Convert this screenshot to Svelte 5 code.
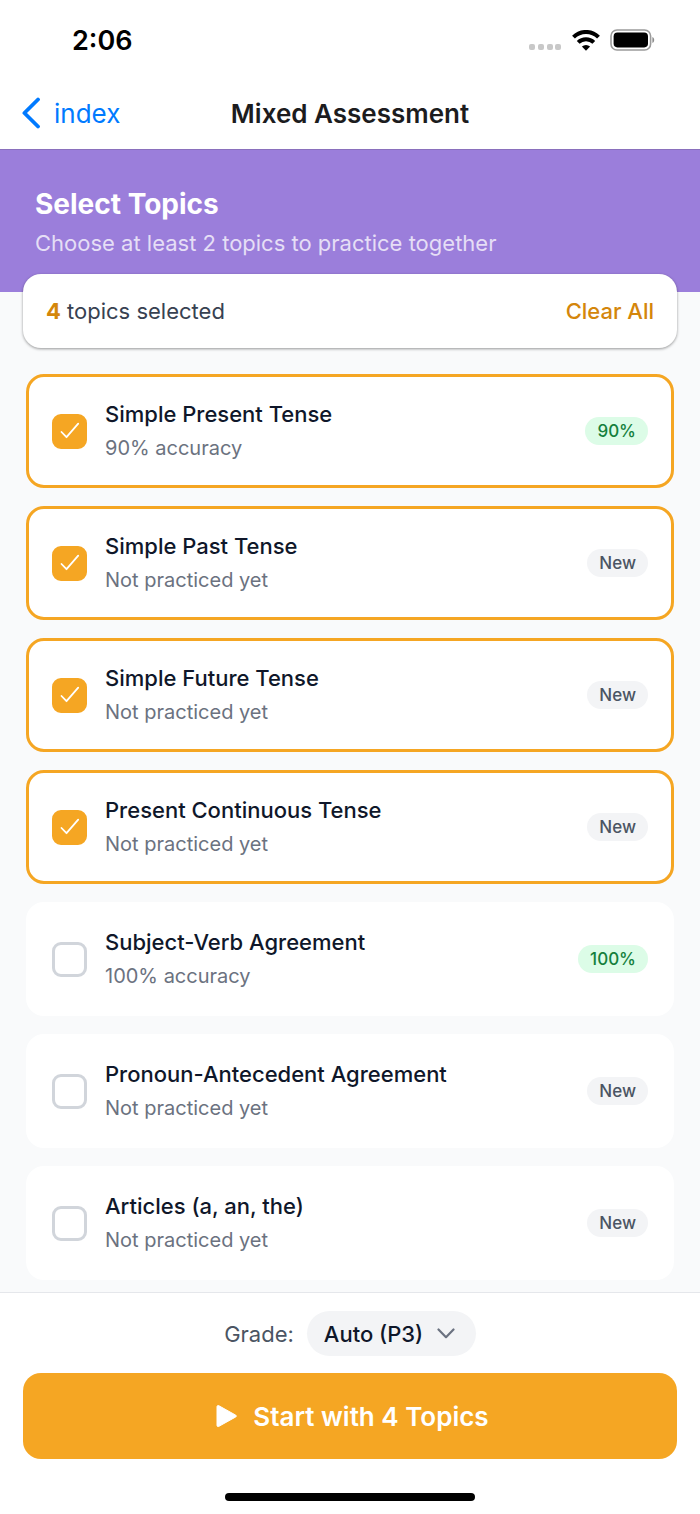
<script lang="ts">
  type Topic = { id: string; name: string; accuracy: number | null };

  const topics: Topic[] = [
    { id: "present", name: "Simple Present Tense", accuracy: 90 },
    { id: "past", name: "Simple Past Tense", accuracy: null },
    { id: "future", name: "Simple Future Tense", accuracy: null },
    { id: "continuous", name: "Present Continuous Tense", accuracy: null },
    { id: "agreement", name: "Subject-Verb Agreement", accuracy: 100 },
    { id: "pronoun", name: "Pronoun-Antecedent Agreement", accuracy: null },
    { id: "articles", name: "Articles (a, an, the)", accuracy: null },
  ];

  let selected = $state(["present", "past", "future", "continuous"]);
  let grade = $state("auto");

  const count = $derived(selected.length);

  function clearAll() {
    selected = [];
  }
</script>

<div class="screen">
  <div class="status-bar">
    <span class="time">2:06</span>
    <div class="status-icons">
      <svg width="33" height="8" viewBox="0 0 33 8" fill="#c8c8c8" aria-hidden="true">
        <rect x="0" y="1" width="6" height="6" rx="2" />
        <rect x="9" y="1" width="6" height="6" rx="2" />
        <rect x="18" y="1" width="6" height="6" rx="2" />
        <rect x="26" y="1" width="6" height="6" rx="2" />
      </svg>
      <svg width="28" height="21" viewBox="0 0 28 21" aria-hidden="true">
        <g fill="none" stroke="#000" stroke-width="4">
          <path d="M1.5 7.1a17.7 17.7 0 0 1 25 0" />
          <path d="M6.2 12.4a11.2 11.2 0 0 1 15.6 0" />
        </g>
        <path d="M14 20.8l-4.1-4.2a6 6 0 0 1 8.2 0z" />
      </svg>
      <svg width="46" height="22" viewBox="0 0 46 22" aria-hidden="true">
        <rect x="1" y="1" width="39.6" height="20" rx="6" fill="none" stroke="#9b9b9b" stroke-width="1.6" />
        <rect x="3.6" y="3.6" width="34.4" height="14.8" rx="3.8" />
        <path d="M42.4 8v6c2.4-.8 2.4-5.2 0-6z" fill="#8c8c8c" />
      </svg>
    </div>
  </div>

  <header class="nav">
    <a class="back" href="#index">
      <svg width="20" height="32" viewBox="0 0 20 32" aria-hidden="true">
        <path d="M18 2.5L4.4 16 18 29.5" fill="none" stroke="#007aff" stroke-width="3.8" stroke-linecap="round" stroke-linejoin="round" />
      </svg>
      <span>index</span>
    </a>
    <h1>Mixed Assessment</h1>
  </header>

  <section class="banner">
    <h2>Select Topics</h2>
    <p>Choose at least 2 topics to practice together</p>
  </section>

  <main>
    <div class="summary">
      <span><strong>{count}</strong> topics selected</span>
      <button class="clear" type="button" onclick={clearAll}>Clear All</button>
    </div>

    <div class="topics">
      {#each topics as topic (topic.id)}
        <label class="topic" class:active={selected.includes(topic.id)}>
          <span class="check">
            <input type="checkbox" value={topic.id} bind:group={selected} />
            <svg width="20" height="18" viewBox="0 0 20 18" aria-hidden="true">
              <path d="M1.5 10L6.5 15.2 18.2 1.6" fill="none" stroke="#fff" stroke-width="1.8" stroke-linecap="round" stroke-linejoin="round" />
            </svg>
          </span>
          <span class="info">
            <span class="name">{topic.name}</span>
            <span class="detail">
              {topic.accuracy !== null ? `${topic.accuracy}% accuracy` : "Not practiced yet"}
            </span>
          </span>
          <span class="badge" class:good={topic.accuracy !== null}>
            {topic.accuracy !== null ? `${topic.accuracy}%` : "New"}
          </span>
        </label>
      {/each}
    </div>
  </main>

  <footer>
    <div class="grade">
      <label for="grade">Grade:</label>
      <div class="select-wrap">
        <select id="grade" bind:value={grade}>
          <option value="auto">Auto (P3)</option>
          <option value="p1">P1</option>
          <option value="p2">P2</option>
          <option value="p3">P3</option>
          <option value="p4">P4</option>
        </select>
        <svg width="18" height="11" viewBox="0 0 18 11" aria-hidden="true">
          <path d="M1.5 1.5L9 9.2 16.5 1.5" fill="none" stroke="#6b7280" stroke-width="2.2" stroke-linecap="round" stroke-linejoin="round" />
        </svg>
      </div>
    </div>
    <button class="start" type="button" disabled={count < 2}>
      <svg width="28" height="24" viewBox="-5 0 28 24" aria-hidden="true">
        <path d="M2.6 1.6L19.8 11.2a1 1 0 0 1 0 1.7L2.6 22.5a1.1 1.1 0 0 1-1.6-1V2.6a1.1 1.1 0 0 1 1.6-1z" fill="#fff" stroke="#fff" />
      </svg>
      <span>Start with {count} Topics</span>
    </button>
    <div class="home-indicator"></div>
  </footer>
</div>

<style>
  :global(body) {
    margin: 0;
    background: #fff;
  }
  .screen {
    display: flex;
    flex-direction: column;
    min-height: 100vh;
    font-family: Inter, "Liberation Sans", sans-serif;
    color: #0f172a;
    background: #fff;
  }
  button,
  select {
    font-family: inherit;
    border: 0;
    cursor: pointer;
  }
  svg {
    display: block;
    flex-shrink: 0;
  }

  .status-bar {
    display: flex;
    align-items: center;
    justify-content: space-between;
    height: 80px;
    padding: 0 44px 0 72px;
  }
  .time {
    font-size: 27px;
    font-weight: 600;
    color: #000;
  }
  .status-icons {
    display: flex;
    align-items: center;
    gap: 10px;
  }
  .status-icons svg:first-child {
    align-self: flex-end;
  }

  .nav {
    display: grid;
    grid-template-columns: 1fr auto 1fr;
    align-items: center;
    height: 66px;
    padding: 0 20px 3px;
    border-bottom: 1px solid #8a70bd;
  }
  .back {
    display: flex;
    align-items: center;
    gap: 14px;
    font-size: 26px;
    color: #007aff;
    text-decoration: none;
  }
  h1 {
    margin: 0;
    font-size: 26px;
    font-weight: 600;
    color: #1c1c1e;
  }

  .banner {
    padding: 36px 35px 33px;
    background: #9b7edb;
    color: #fff;
  }
  h2 {
    margin: 0 0 5px;
    font-size: 28px;
    line-height: 36px;
    font-weight: 700;
  }
  .banner p {
    margin: 0;
    font-size: 22px;
    line-height: 32px;
    color: rgba(255, 255, 255, 0.75);
  }

  main {
    flex: 1;
    padding: 0 23px 12px;
    background: #f9fafb;
  }
  /* Pulled up so the card overlaps the banner */
  .summary {
    position: relative;
    display: flex;
    align-items: center;
    justify-content: space-between;
    height: 74px;
    margin-top: -18px;
    padding: 0 23px;
    border-radius: 18px;
    background: #fff;
    box-shadow: 0 1px 3px rgba(0, 0, 0, 0.4);
    font-size: 22px;
    color: #374151;
  }
  .summary strong {
    font-weight: 700;
    color: #d4860b;
  }
  .clear {
    padding: 0;
    background: none;
    font-size: 22px;
    font-weight: 500;
    color: #d4860b;
  }

  .topics {
    display: flex;
    flex-direction: column;
    gap: 18px;
    padding: 26px 3px 0;
  }
  .topic {
    display: flex;
    align-items: center;
    gap: 18px;
    box-sizing: border-box;
    min-height: 114px;
    padding: 16px 23px;
    border: 3px solid #fff;
    border-radius: 18px;
    background: #fff;
    cursor: pointer;
  }
  .topic.active {
    border-color: #f5a623;
  }
  .check {
    display: grid;
    place-items: center;
    flex-shrink: 0;
  }
  .check > * {
    grid-area: 1 / 1;
  }
  .check svg {
    pointer-events: none;
  }
  input {
    appearance: none;
    width: 35px;
    height: 35px;
    margin: 0;
    border: 3px solid #d1d5db;
    border-radius: 9px;
    background: #fff;
  }
  input:checked {
    border-color: #f5a623;
    background: #f5a623;
  }
  .info {
    display: flex;
    flex: 1;
    flex-direction: column;
    gap: 4px;
    padding-bottom: 2px;
  }
  .name {
    font-size: 22px;
    line-height: 32px;
    font-weight: 500;
  }
  .detail {
    font-size: 20px;
    line-height: 28px;
    color: #6b7280;
  }
  .badge {
    padding: 0 12px;
    border-radius: 14px;
    background: #f3f4f6;
    font-size: 17px;
    line-height: 28px;
    font-weight: 500;
    color: #4b5563;
  }
  .badge.good {
    background: #dcfce7;
    color: #15803d;
  }

  footer {
    display: flex;
    flex-direction: column;
    padding: 18px 23px 13px;
    border-top: 1px solid #e5e7eb;
    background: #fff;
  }
  .grade {
    display: flex;
    align-items: center;
    justify-content: center;
    gap: 13px;
    margin-bottom: 17px;
    font-size: 22px;
    color: #4b5563;
  }
  .select-wrap {
    display: grid;
    align-items: center;
  }
  .select-wrap > * {
    grid-area: 1 / 1;
  }
  .select-wrap svg {
    justify-self: end;
    margin-right: 21px;
    pointer-events: none;
  }
  select {
    appearance: none;
    height: 45px;
    padding: 0 52px 0 17px;
    border-radius: 23px;
    background: #f3f4f6;
    font-size: 22px;
    font-weight: 500;
    color: #0f172a;
  }
  .start {
    display: flex;
    align-items: center;
    justify-content: center;
    gap: 14px;
    height: 86px;
    border-radius: 18px;
    background: #f5a623;
    font-size: 26px;
    font-weight: 600;
    color: #fff;
  }
  .start:disabled {
    opacity: 0.5;
  }
  .home-indicator {
    align-self: center;
    width: 250px;
    height: 8px;
    margin-top: 34px;
    border-radius: 4px;
    background: #000;
  }
</style>
